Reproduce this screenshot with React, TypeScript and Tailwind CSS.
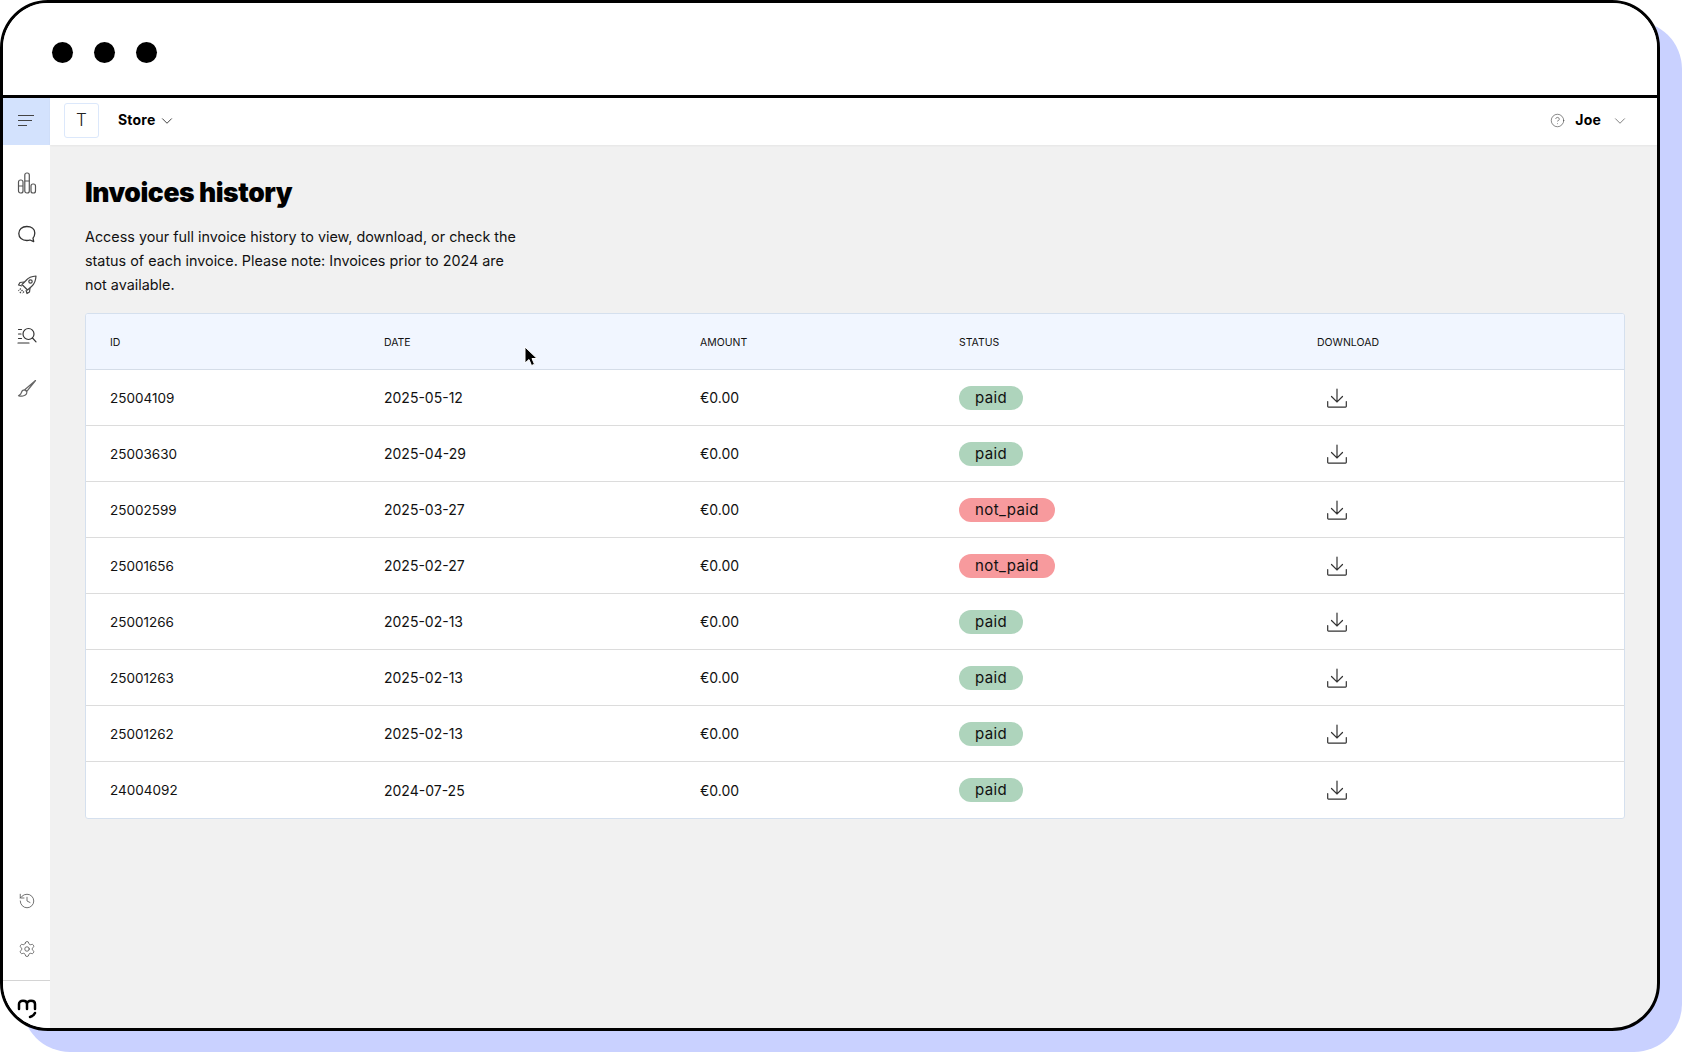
import { ChevronDown, CircleHelp, History, Settings } from 'lucide-react';

const invoices = [
  { id: '25004109', date: '2025-05-12', status: 'paid' },
  { id: '25003630', date: '2025-04-29', status: 'paid' },
  { id: '25002599', date: '2025-03-27', status: 'not_paid' },
  { id: '25001656', date: '2025-02-27', status: 'not_paid' },
  { id: '25001266', date: '2025-02-13', status: 'paid' },
  { id: '25001263', date: '2025-02-13', status: 'paid' },
  { id: '25001262', date: '2025-02-13', status: 'paid' },
  { id: '24004092', date: '2024-07-25', status: 'paid' },
];

const rowClass = 'grid grid-cols-[274px_316px_259px_358px_1fr] items-center pl-[24px]';

function BarsIcon() {
  return (
    <svg width="20" height="22" viewBox="0 0 20 22" fill="none" stroke="#555" strokeWidth="1.2">
      <rect x="1.500" y="8" width="4.500" height="13" rx="2" />
      <path d="M1.500 14h4.500" />
      <rect x="7.800" y="1" width="4.500" height="20" rx="2" />
      <path d="M7.800 9h4.500" />
      <rect x="14" y="12" width="4.500" height="9" rx="2" />
    </svg>
  );
}

function BubbleIcon() {
  return (
    <svg width="20" height="20" viewBox="0 0 20 20" fill="none" stroke="#333" strokeWidth="1.300" strokeLinejoin="round">
      <path d="M9.800 2.500c4.800 0 8 2.600 8 6.400 0 2.200-.8 4-1.800 5.200l.7 3.600-3.700-1.700c-1 .4-2 .5-3.200.5-4.800 0-8-3-8-7 0-4 3.200-7 8-7z" />
    </svg>
  );
}

function RocketIcon() {
  return (
    <svg width="20" height="20" viewBox="0 0 20 20" fill="none" stroke="#444" strokeWidth="1.200" strokeLinejoin="round">
      <path d="M19 1c-4 .2-7.500 1.500-10 4.500L5 9.500l5.500 5.500 4-3.500C17.500 9 18.800 5 19 1z" />
      <circle cx="13.500" cy="6.500" r="1.700" />
      <path d="M7 7 3 7.500 1.500 10l3.500 1M13 13l-.5 4-2.500 1.500-1-3.500" />
      <path d="M3.800 13.500 1.500 15.800M5.500 15l-2.600 3M7 16.500l-1.800 2" strokeDasharray="1.500 1" />
    </svg>
  );
}

function SearchListIcon() {
  return (
    <svg width="20" height="20" viewBox="0 0 20 20" fill="none" stroke="#333" strokeWidth="1.200" strokeLinecap="round">
      <circle cx="11.500" cy="8" r="5.500" />
      <path d="m15.500 12 3.500 3.800M1.500 3.500h3M1.500 8h2.500M1.500 12.500h3M1 17h11" />
    </svg>
  );
}

function BrushIcon() {
  return (
    <svg width="20" height="20" viewBox="0 0 20 20" fill="none" stroke="#666" strokeWidth="1.200" strokeLinejoin="round">
      <path d="M18.500 1.500 8 10.500l1.800 1.800z" />
      <path d="M7.800 10.800c-1.800.1-3 .9-3.300 2.500-.2 1.300-1 2.200-3 3.400 2.700 1 6.500.3 7.800-1.500.7-1 .7-2 .2-2.900z" />
    </svg>
  );
}

function DownloadIcon() {
  return (
    <svg width="20" height="20" viewBox="0 0 20 20" fill="none" stroke="#333" strokeWidth="1.200" strokeLinecap="round">
      <path d="M10 1v13M4.500 8.500 10 14l5.500-5.500" />
      <path d="M.7 13.500v4.800a.8.800 0 0 0 .8.8h17a.8.800 0 0 0 .8-.8v-4.800" />
    </svg>
  );
}

export default function App() {
  return (
    <div className="h-[1052px] w-[1682px] overflow-hidden bg-white font-['Inter',sans-serif] text-black">
      <div className="flex h-[1031px] w-[1660px] flex-col overflow-hidden rounded-[48px] border-[3px] border-black bg-[#f1f1f1] shadow-[22px_21px_0_#c9d1ff]">
        {/* window bar */}
        <div className="flex h-[95px] shrink-0 items-center gap-[21px] border-b-[3px] border-black bg-white pl-[49px] pt-[6px]">
          <span className="h-[21px] w-[21px] rounded-full bg-black" />
          <span className="h-[21px] w-[21px] rounded-full bg-black" />
          <span className="h-[21px] w-[21px] rounded-full bg-black" />
        </div>

        <div className="flex min-h-0 flex-1">
          {/* sidebar */}
          <div className="flex w-[47px] shrink-0 flex-col bg-white">
            <div className="flex h-[47px] items-center justify-center bg-[#d3e2fd] pb-[2px] pr-[2px]">
              <svg width="17" height="13" viewBox="0 0 17 13" fill="none" stroke="#444" strokeWidth="1">
                <path d="M1 1.500h16M1 6.500h14M1 11.500h9" />
              </svg>
            </div>
            <div className="mt-[27px] flex flex-col items-center gap-[31px]">
              <BarsIcon />
              <div className="-mt-[1px]">
                <BubbleIcon />
              </div>
              <RocketIcon />
              <SearchListIcon />
              <div className="mt-[2px]">
                <BrushIcon />
              </div>
            </div>
            <div className="flex-1" />
            <div className="flex flex-col items-center gap-[30px] pb-[22px]">
              <History size={18} strokeWidth={1.1} color="#555" />
              <Settings size={18} strokeWidth={1.1} color="#555" />
            </div>
            <div className="flex h-[48px] justify-center border-t border-[#d4d4d4] pt-[17px]">
              <svg width="20" height="22" viewBox="0 0 20 22" fill="none" stroke="#000" strokeWidth="2.500" strokeLinecap="round">
                <path d="M2 11V6c0-2 1.500-3.200 4-3.200S10 4 10 6v5M10 6c0-2 1.500-3.200 4-3.200s4 1.200 4 3.200v5" />
                <path d="M18 15c-.8 2-2.500 3.300-5 4" />
              </svg>
            </div>
          </div>

          <div className="flex min-w-0 flex-1 flex-col">
            {/* top nav */}
            <div className="flex h-[47px] shrink-0 items-center bg-white pb-[2px] pl-[14px] pr-[28px] shadow-[0_1px_2px_rgba(0,0,0,0.05)]">
              <div className="flex h-[35px] w-[35px] items-center justify-center rounded-[3px] border border-[#dce8fb] text-[17px] font-light text-[#222]">
                T
              </div>
              <span className="mb-[3px] ml-[19px] text-[14px] font-bold tracking-[0.2px]">Store</span>
              <ChevronDown size={18} strokeWidth={1} className="ml-[3px]" />
              <div className="flex-1" />
              <CircleHelp size={15} strokeWidth={1} color="#444" />
              <span className="mb-[3px] ml-[10px] text-[14px] font-bold tracking-[0.2px]">Joe</span>
              <ChevronDown size={18} strokeWidth={0.9} className="ml-[10px]" color="#444" />
            </div>

            {/* page content */}
            <div className="flex-1 pl-[35px] pr-[32px] pt-[28px]">
              <h1 className="text-[26.500px] font-black leading-[38px] tracking-[-0.45px]">Invoices history</h1>
              <p className="mt-[14px] w-[436px] text-[14.370px] leading-[24px] text-[#111]">
                Access your full invoice history to view, download, or check the status of each invoice. Please note: Invoices prior to 2024 are not available.
              </p>
              <div className="mt-[16px] overflow-hidden rounded-[3px] border border-[#d5e0ee] bg-white text-[14px] text-[#111]">
                <div className={`${rowClass} h-[56px] border-b border-[#d5dde8] bg-[#f1f6ff] pt-[2px] text-[10.500px]`}>
                  <span>ID</span>
                  <span>DATE</span>
                  <span>AMOUNT</span>
                  <span>STATUS</span>
                  <span>DOWNLOAD</span>
                </div>
                {invoices.map((inv) => (
                  <div key={inv.id} className={`${rowClass} h-[56px] border-b border-[#dcdcdc] last:border-b-0`}>
                    <span className="pt-[1px] text-[13.500px]">{inv.id}</span>
                    <span>{inv.date}</span>
                    <span>€0.00</span>
                    <span>
                      <span className={`inline-block h-[24px] rounded-full px-[16px] text-[15px] leading-[24px] tracking-[0.4px] ${inv.status === 'paid' ? 'bg-[#aed4bc]' : 'bg-[#f79a9d]'}`}>
                        {inv.status}
                      </span>
                    </span>
                    <span className="pl-[10px]">
                      <DownloadIcon />
                    </span>
                  </div>
                ))}
              </div>
            </div>
          </div>
        </div>
      </div>

      {/* mouse pointer in the capture */}
      <svg className="absolute left-[524px] top-[346px]" width="14" height="22" viewBox="0 0 14 22">
        <path d="M1 1v16l4-3.500 2.500 6 3-1.200L8 12.500h5z" fill="#000" stroke="#fff" strokeWidth="1" />
      </svg>
    </div>
  );
}
